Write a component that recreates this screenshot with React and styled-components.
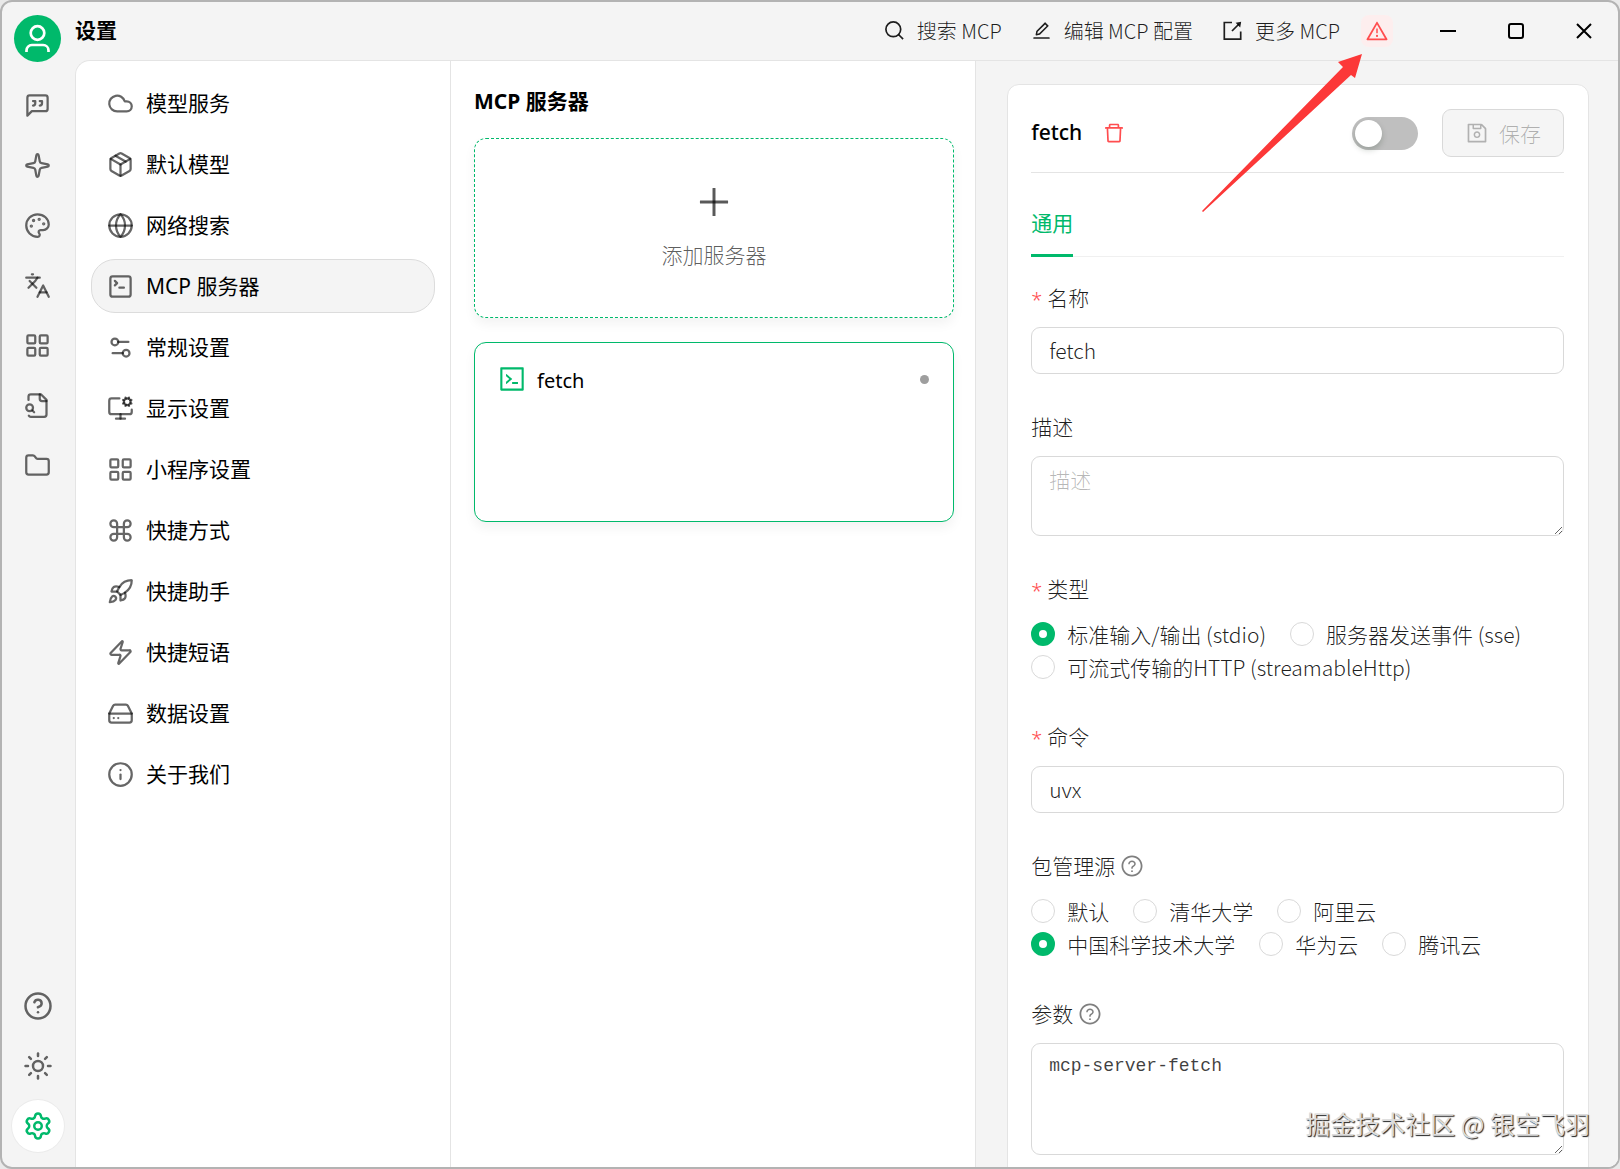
import { useState } from 'react'
import styled, { createGlobalStyle, css } from 'styled-components'
import {
  Cloud,
  Command,
  CircleQuestionMark,
  Folder,
  Globe,
  HardDrive,
  Info,
  Languages,
  LayoutGrid,
  MonitorCog,
  Package,
  Palette,
  Rocket,
  Settings,
  Settings2,
  Sparkle,
  SquareTerminal,
  Sun,
  Zap,
} from 'lucide-react'
import {
  AiOutlineCode,
  AiOutlineDelete,
  AiOutlineEdit,
  AiOutlinePlus,
  AiOutlineQuestionCircle,
  AiOutlineSave,
  AiOutlineWarning,
} from 'react-icons/ai'

const green = '#00b96b'
const line = '#e4e4e4'
const uiFont = '"Noto Sans", "Noto Sans CJK SC", sans-serif'
const lightFont = '"Noto Sans CJK SC", "Noto Sans", sans-serif'

const GlobalStyle = createGlobalStyle`
  * {
    box-sizing: border-box;
  }

  body {
    margin: 0;
    background: #e9e9e9;
    color: #000;
    font-family: ${uiFont};
    font-size: 21px;
    line-height: 33px;
  }

  button, input, textarea {
    font: inherit;
    color: inherit;
  }

  button {
    padding: 0;
    border: 0;
    background: none;
    cursor: pointer;
  }

  svg {
    flex: none;
  }
`

const Window = styled.div`
  position: relative;
  display: flex;
  height: 100vh;
  border: 2px solid #b3b3b3;
  border-radius: 12px;
  background: #f4f4f4;
  overflow: hidden;
`

const Sidebar = styled.aside`
  display: flex;
  flex-direction: column;
  align-items: center;
  justify-content: space-between;
  flex: none;
  width: 73px;
  padding: 13px 2px 15px 0;
`

const SideGroup = styled.nav`
  display: flex;
  flex-direction: column;
  align-items: center;
  gap: 8px;
`

const Avatar = styled.button`
  width: 47px;
  height: 47px;
  margin-bottom: 9px;
  border-radius: 50%;
  background: ${green};
`

const SideButton = styled.button`
  display: flex;
  align-items: center;
  justify-content: center;
  width: 52px;
  height: 52px;
  border-radius: 50%;
  color: rgba(0, 0, 0, 0.6);

  ${({ $active }) => $active && css`
    background: #fff;
    box-shadow: 0 0 0 1px #ebebeb;
    color: ${green};
  `}
`

const Main = styled.div`
  display: flex;
  flex-direction: column;
  flex: 1;
  min-width: 0;
`

const TitleBar = styled.header`
  display: flex;
  align-items: center;
  flex: none;
  height: 58px;
`

const PageTitle = styled.h1`
  margin: 0 auto 0 0;
  padding-bottom: 2px;
  font-size: 21px;
  font-weight: 700;
`

const Tools = styled.div`
  display: flex;
  align-items: center;
  gap: 29px;
`

const ToolButton = styled.button`
  display: flex;
  align-items: center;
  gap: 12px;
  padding-bottom: 2px;
  font-family: ${lightFont};
  font-size: 20px;
  font-weight: 300;
  white-space: nowrap;
  color: rgba(0, 0, 0, 0.88);
`

const WarningButton = styled.button`
  display: flex;
  align-items: center;
  justify-content: center;
  width: 32px;
  height: 32px;
  margin: 0 21px;
  border-radius: 8px;
  background: #fdeeee;
  color: #ff4d4f;
`

const WindowButton = styled.button`
  display: flex;
  align-items: center;
  justify-content: center;
  width: 68px;
  height: 58px;
`

const Body = styled.div`
  display: grid;
  grid-template-columns: 375px minmax(0, 9fr) minmax(0, 11fr);
  grid-template-rows: minmax(0, 1fr);
  flex: 1;
  min-height: 0;
  border-top: 1px solid ${line};
  border-left: 1px solid ${line};
  border-top-left-radius: 15px;
  background: #fff;
  overflow: hidden;
`

const SettingsMenu = styled.nav`
  display: flex;
  flex-direction: column;
  gap: 7px;
  padding: 15px;
  border-right: 1px solid ${line};
`

const MenuItem = styled.a`
  display: flex;
  align-items: center;
  gap: 12px;
  height: 54px;
  padding: 0 15px;
  border: 1px solid ${({ $active }) => ($active ? '#dcdcdc' : 'transparent')};
  border-radius: 24px;
  background: ${({ $active }) => ($active ? '#f4f4f4' : 'transparent')};
  color: #000;
  text-decoration: none;

  svg {
    color: rgba(0, 0, 0, 0.6);
  }
`

const ServerList = styled.section`
  display: flex;
  flex-direction: column;
  gap: 24px;
  padding: 24px 21px 24px 23px;
  border-right: 1px solid ${line};
`

const ListTitle = styled.h2`
  margin: 0 0 -4px;
  font-size: 21px;
  font-weight: 700;
`

const cardStyle = css`
  height: 180px;
  border-radius: 12px;
  background: #fff;
  box-shadow: 0 6px 12px rgba(0, 0, 0, 0.05);
`

const AddCard = styled.button`
  ${cardStyle}
  display: flex;
  flex-direction: column;
  align-items: center;
  justify-content: center;
  gap: 16px;
  padding-bottom: 4px;
  border: 1px dashed ${green};
  font-family: ${lightFont};
  font-weight: 300;
  color: rgba(0, 0, 0, 0.65);
`

const ServerCard = styled.button`
  ${cardStyle}
  display: flex;
  align-items: flex-start;
  gap: 10px;
  padding: 21px 24px 21px 22px;
  border: 1px solid ${green};

  svg {
    color: ${green};
  }
`

const ServerName = styled.span`
  flex: 1;
  font-size: 20px;
  text-align: left;
`

const StatusDot = styled.span`
  width: 9px;
  height: 9px;
  margin-top: 11px;
  border-radius: 50%;
  background: #9e9e9e;
`

const Detail = styled.section`
  padding: 23px 29px 0 31px;
  background: #f4f4f4;
  overflow: hidden;
`

const DetailCard = styled.form`
  min-height: 100%;
  padding: 24px 24px 24px 23px;
  border: 1px solid ${line};
  border-radius: 12px;
  background: #fff;
`

const DetailHeader = styled.div`
  display: flex;
  align-items: center;
  gap: 24px;
  padding-bottom: 15px;
  border-bottom: 1px solid ${line};
`

const DetailTitle = styled.div`
  display: flex;
  align-items: center;
  flex: 1;
  gap: 20px;
`

const DetailName = styled.h3`
  margin: 0;
  padding-bottom: 2px;
  font-size: 21px;
  font-weight: 500;
`

const DeleteButton = styled.button`
  display: flex;
  color: #ff4d4f;
`

const Switch = styled.input`
  appearance: none;
  display: flex;
  align-items: center;
  width: 66px;
  height: 33px;
  margin: 0;
  padding: 3px;
  border-radius: 17px;
  background: #bfbfbf;
  cursor: pointer;

  &::before {
    content: '';
    width: 27px;
    height: 27px;
    border-radius: 50%;
    background: #fff;
    box-shadow: 0 3px 6px rgba(0, 35, 11, 0.2);
  }

  &:checked {
    justify-content: flex-end;
    background: ${green};
  }
`

const SaveButton = styled.button`
  display: flex;
  align-items: center;
  justify-content: center;
  gap: 10px;
  width: 122px;
  height: 48px;
  border: 1px solid #d9d9d9;
  border-radius: 9px;
  background: #f5f5f5;
  font-family: ${lightFont};
  font-weight: 300;
  color: rgba(0, 0, 0, 0.28);
`

const Tabs = styled.div`
  display: flex;
  margin-bottom: 25px;
  padding-top: 34px;
  border-bottom: 1px solid #f0f0f0;
`

const Tab = styled.button`
  margin-bottom: -1px;
  padding-bottom: 14px;
  border-bottom: 3px solid ${green};
  color: ${green};
`

const Field = styled.div`
  min-width: 0;
  margin: 0 0 37px;
  padding: 0;
  border: 0;
  font-family: ${lightFont};
  font-weight: 300;
  color: rgba(0, 0, 0, 0.88);
`

const FieldLabel = styled.label`
  display: flex;
  align-items: center;
  gap: 5px;
  height: 31px;
  margin-bottom: 14px;
  padding: 0;
  line-height: 31px;

  svg {
    color: rgba(0, 0, 0, 0.5);
  }
`

const Required = styled.span`
  width: 11px;
  padding-top: 5px;
  font-family: "Noto Sans", sans-serif;
  font-size: 20px;
  line-height: 26px;
  color: #ff4d4f;
`

const inputStyle = css`
  display: block;
  width: 100%;
  border: 1px solid #d9d9d9;
  border-radius: 9px;
  background: #fff;
  outline: none;

  &:focus {
    border-color: ${green};
  }
`

const TextInput = styled.input`
  ${inputStyle}
  height: 47px;
  padding: 0 17px 2px;
`

const TextArea = styled.textarea`
  ${inputStyle}
  height: ${({ $tall }) => ($tall ? 112 : 80)}px;
  padding: 6px 17px;
  resize: vertical;

  ${({ $mono }) => $mono && css`
    font-family: "Liberation Mono", monospace;
    font-size: 18px;
    font-weight: 400;
    color: rgba(0, 0, 0, 0.75);
  `}

  &::placeholder {
    color: rgba(0, 0, 0, 0.28);
  }
`

const Options = styled.div`
  display: flex;
  flex-wrap: wrap;
  column-gap: 24px;
`

const Option = styled.label`
  display: flex;
  align-items: center;
  gap: 12px;
  cursor: pointer;
`

const Radio = styled.input`
  appearance: none;
  width: 24px;
  height: 24px;
  margin: 0 0 2px;
  border: 1px solid #d9d9d9;
  border-radius: 50%;
  background: #fff;

  &:checked {
    border: 8px solid ${green};
  }
`

const Arrow = styled.svg`
  position: absolute;
  top: 50px;
  right: 254px;
  pointer-events: none;
`

const Watermark = styled.div`
  position: absolute;
  right: 28px;
  bottom: 27px;
  font-family: ${lightFont};
  font-size: 25px;
  color: #dcdcdc;
  text-shadow: 1px 1px 1px #222;
  pointer-events: none;
`

function Stroke({ size = 27, children }) {
  return (
    <svg width={size} height={size} viewBox="0 0 24 24" fill="none" stroke="currentColor"
      strokeWidth="2" strokeLinecap="round" strokeLinejoin="round" aria-hidden="true">
      {children}
    </svg>
  )
}

function ChatIcon() {
  return (
    <Stroke>
      <path d="M21 15a2 2 0 0 1-2 2H7l-4 4V5a2 2 0 0 1 2-2h14a2 2 0 0 1 2 2z" />
      <path d="M8 12a2 2 0 0 0 2-2V8H8" />
      <path d="M14 12a2 2 0 0 0 2-2V8h-2" />
    </Stroke>
  )
}

function FileSearchIcon() {
  return (
    <Stroke>
      <path d="M14 2v4a2 2 0 0 0 2 2h4" />
      <path d="M4.268 21a2 2 0 0 0 1.727 1H18a2 2 0 0 0 2-2V7l-5-5H6a2 2 0 0 0-2 2v3" />
      <path d="m9 18-1.5-1.5" />
      <circle cx="5" cy="14" r="3" />
    </Stroke>
  )
}

function UserIcon() {
  return (
    <svg width="47" height="47" viewBox="0 0 47 47" fill="none" stroke="#fff" strokeWidth="2.7" aria-hidden="true">
      <circle cx="23.5" cy="18" r="6.8" />
      <path d="M12.5 37v-1.6a5.4 5.4 0 0 1 5.4-5.4h11.2a5.4 5.4 0 0 1 5.4 5.4V37" />
    </svg>
  )
}

function SearchIcon() {
  return (
    <svg width="21" height="21" viewBox="0 0 21 21" fill="none" stroke="currentColor" strokeWidth="1.7" aria-hidden="true">
      <circle cx="9.3" cy="9.3" r="7.4" />
      <path d="m14.5 14.5 4.6 4.6" />
    </svg>
  )
}

function ExportIcon() {
  return (
    <svg width="21" height="21" viewBox="0 0 21 21" fill="none" stroke="currentColor" strokeWidth="1.7" aria-hidden="true">
      <path d="M10 2.5H2.3v16.6h16.4V11.5" />
      <path d="M10 11 17 4" />
      <path d="M13.6 2.8 19.2 1.8 18.2 7.4z" fill="currentColor" stroke="none" />
    </svg>
  )
}

const sideTop = [
  ['聊天', ChatIcon],
  ['助手', Sparkle],
  ['绘画', Palette],
  ['翻译', Languages],
  ['小程序', LayoutGrid],
  ['知识库', FileSearchIcon],
  ['文件', Folder],
]

const menu = [
  ['模型服务', Cloud],
  ['默认模型', Package],
  ['网络搜索', Globe],
  ['MCP 服务器', SquareTerminal],
  ['常规设置', Settings2],
  ['显示设置', MonitorCog],
  ['小程序设置', LayoutGrid],
  ['快捷方式', Command],
  ['快捷助手', Rocket],
  ['快捷短语', Zap],
  ['数据设置', HardDrive],
  ['关于我们', Info],
]

const types = ['标准输入/输出 (stdio)', '服务器发送事件 (sse)', '可流式传输的HTTP (streamableHttp)']
const registries = ['默认', '清华大学', '阿里云', '中国科学技术大学', '华为云', '腾讯云']

function RadioField({ name, label, required, help, options, initial }) {
  const [value, setValue] = useState(initial)
  return (
    <Field as="fieldset">
      <FieldLabel as="legend">
        {required && <Required>*</Required>}
        {label}
        {help && <AiOutlineQuestionCircle size={24} />}
      </FieldLabel>
      <Options>
        {options.map((option) => (
          <Option key={option}>
            <Radio type="radio" name={name} checked={value === option} onChange={() => setValue(option)} />
            {option}
          </Option>
        ))}
      </Options>
    </Field>
  )
}

export default function App() {
  return (
    <>
      <GlobalStyle />
      <Window>
        <Sidebar>
          <SideGroup>
            <Avatar type="button" aria-label="用户"><UserIcon /></Avatar>
            {sideTop.map(([label, Icon]) => (
              <SideButton key={label} type="button" aria-label={label}>
                <Icon size={27} strokeWidth={2} />
              </SideButton>
            ))}
          </SideGroup>
          <SideGroup>
            <SideButton type="button" aria-label="帮助"><CircleQuestionMark size={30} strokeWidth={2} /></SideButton>
            <SideButton type="button" aria-label="主题"><Sun size={30} strokeWidth={2} /></SideButton>
            <SideButton type="button" aria-label="设置" $active><Settings size={30} strokeWidth={2} /></SideButton>
          </SideGroup>
        </Sidebar>

        <Main>
          <TitleBar>
            <PageTitle>设置</PageTitle>
            <Tools>
              <ToolButton type="button"><SearchIcon />搜索 MCP</ToolButton>
              <ToolButton type="button"><AiOutlineEdit size={21} />编辑 MCP 配置</ToolButton>
              <ToolButton type="button"><ExportIcon />更多 MCP</ToolButton>
            </Tools>
            <WarningButton type="button" aria-label="警告"><AiOutlineWarning size={24} /></WarningButton>
            <WindowButton type="button" aria-label="最小化">
              <svg width="16" height="16" viewBox="0 0 16 16" stroke="#000" strokeWidth="2"><path d="M0 8h16" /></svg>
            </WindowButton>
            <WindowButton type="button" aria-label="最大化">
              <svg width="16" height="16" viewBox="0 0 16 16" fill="none" stroke="#000" strokeWidth="2">
                <rect x="1" y="1" width="14" height="14" rx="2" />
              </svg>
            </WindowButton>
            <WindowButton type="button" aria-label="关闭">
              <svg width="16" height="16" viewBox="0 0 16 16" stroke="#000" strokeWidth="2">
                <path d="M1 1l14 14M15 1L1 15" />
              </svg>
            </WindowButton>
          </TitleBar>

          <Body>
            <SettingsMenu>
              {menu.map(([label, Icon]) => (
                <MenuItem key={label} href="#" $active={label === 'MCP 服务器'}>
                  <Icon size={27} strokeWidth={2} />
                  {label}
                </MenuItem>
              ))}
            </SettingsMenu>

            <ServerList>
              <ListTitle>MCP 服务器</ListTitle>
              <AddCard type="button">
                <AiOutlinePlus size={40} />
                添加服务器
              </AddCard>
              <ServerCard type="button">
                <AiOutlineCode size={30} />
                <ServerName>fetch</ServerName>
                <StatusDot />
              </ServerCard>
            </ServerList>

            <Detail>
              <DetailCard onSubmit={(e) => e.preventDefault()}>
                <DetailHeader>
                  <DetailTitle>
                    <DetailName>fetch</DetailName>
                    <DeleteButton type="button" aria-label="删除"><AiOutlineDelete size={24} /></DeleteButton>
                  </DetailTitle>
                  <Switch type="checkbox" role="switch" aria-label="启用" />
                  <SaveButton type="submit" disabled><AiOutlineSave size={24} />保存</SaveButton>
                </DetailHeader>
                <Tabs role="tablist">
                  <Tab type="button" role="tab" aria-selected="true">通用</Tab>
                </Tabs>

                <Field>
                  <FieldLabel htmlFor="name"><Required>*</Required>名称</FieldLabel>
                  <TextInput id="name" defaultValue="fetch" />
                </Field>
                <Field>
                  <FieldLabel htmlFor="description">描述</FieldLabel>
                  <TextArea id="description" placeholder="描述" />
                </Field>
                <RadioField name="type" label="类型" required options={types} initial={types[0]} />
                <Field>
                  <FieldLabel htmlFor="command"><Required>*</Required>命令</FieldLabel>
                  <TextInput id="command" defaultValue="uvx" />
                </Field>
                <RadioField name="registry" label="包管理源" help options={registries} initial={registries[3]} />
                <Field>
                  <FieldLabel htmlFor="args">参数<AiOutlineQuestionCircle size={24} /></FieldLabel>
                  <TextArea id="args" $tall $mono defaultValue="mcp-server-fetch" />
                </Field>
              </DetailCard>
            </Detail>
          </Body>
        </Main>

        <Arrow width="162" height="162" viewBox="0 0 162 162" fill="#fc3838" aria-hidden="true">
          <path d="M160 2 136 10 141 15 0 159 1 160 149 23 153 26z" />
        </Arrow>
        <Watermark>掘金技术社区 @ 银空飞羽</Watermark>
      </Window>
    </>
  )
}
